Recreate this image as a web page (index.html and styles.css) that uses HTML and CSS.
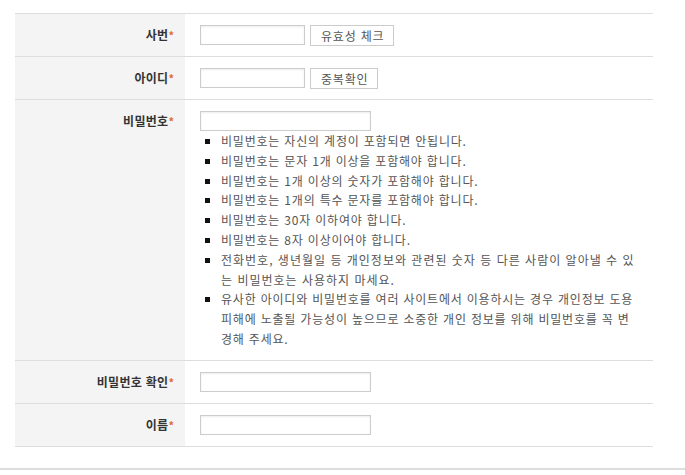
FILE: index.html
```html
<!DOCTYPE html>
<html lang="ko">
<head>
<meta charset="utf-8">
<link rel="stylesheet" href="styles.css">
</head>
<body>
<div class="wrap">
  <table class="form">
    <tr>
      <th>사번<span class="req">*</span></th>
      <td><div class="line"><input class="in short" type="text"><button class="btn">유효성 체크</button></div></td>
    </tr>
    <tr>
      <th>아이디<span class="req">*</span></th>
      <td><div class="line"><input class="in short" type="text"><button class="btn">중복확인</button></div></td>
    </tr>
    <tr>
      <th>비밀번호<span class="req">*</span></th>
      <td>
        <div class="line"><input class="in long" type="password"></div>
        <ul class="rules">
          <li>비밀번호는 자신의 계정이 포함되면 안됩니다.</li>
          <li>비밀번호는 문자 1개 이상을 포함해야 합니다.</li>
          <li>비밀번호는 1개 이상의 숫자가 포함해야 합니다.</li>
          <li>비밀번호는 1개의 특수 문자를 포함해야 합니다.</li>
          <li>비밀번호는 30자 이하여야 합니다.</li>
          <li>비밀번호는 8자 이상이어야 합니다.</li>
          <li class="wide">전화번호, 생년월일 등 개인정보와 관련된 숫자 등 다른 사람이 알아낼 수 있는 비밀번호는 사용하지 마세요.</li>
          <li>유사한 아이디와 비밀번호를 여러 사이트에서 이용하시는 경우 개인정보 도용 피해에 노출될 가능성이 높으므로 소중한 개인 정보를 위해 비밀번호를 꼭 변경해 주세요.</li>
        </ul>
      </td>
    </tr>
    <tr>
      <th>비밀번호 확인<span class="req">*</span></th>
      <td><div class="line"><input class="in long" type="password"></div></td>
    </tr>
    <tr>
      <th>이름<span class="req">*</span></th>
      <td><div class="line"><input class="in long" type="text"></div></td>
    </tr>
  </table>
</div>
<div class="footer-line"></div>
</body>
</html>
```

FILE: styles.css
```css
html, body {
  margin: 0;
  padding: 0;
  background: #fff;
}
body {
  font-family: "Noto Sans CJK KR", "Noto Sans", sans-serif;
  font-size: 12px;
  color: #555;
  letter-spacing: 0.8px;
}
.wrap {
  padding: 13px 32px 0 15px;
}
.form {
  width: 638px;
  border-collapse: collapse;
  border-top: 1px solid #ddd;
}
.form tr {
  border-bottom: 1px solid #ddd;
}
.form th {
  width: 170px;
  box-sizing: border-box;
  background: #f4f4f4;
  text-align: right;
  vertical-align: top;
  padding: 11px 11px 11px 0;
  font-weight: bold;
  color: #333;
  line-height: 20px;
  font-size: 12px;
  letter-spacing: 0.3px;
}
.req {
  color: #e2693e;
  font-size: 11px;
  letter-spacing: 0;
}
.form td {
  vertical-align: top;
  padding: 11px 12px 11px 15px;
}
.line {
  display: flex;
  gap: 5px;
  height: 20px;
}
.in {
  box-sizing: border-box;
  height: 20px;
  margin: 0;
  border: 1px solid #ccc;
  box-shadow: inset 0 1px 2px rgba(0,0,0,0.08);
  background: #fff;
  padding: 0 4px;
  font-size: 12px;
}
.short { width: 105px; }
.long { width: 171px; }
.btn {
  box-sizing: border-box;
  height: 21px;
  margin: 0;
  padding: 0 9px 0 10px;
  border: 1px solid #ccc;
  background: #fff;
  color: #555;
  font-family: "Noto Sans CJK KR", "Noto Sans", sans-serif;
  font-size: 12px;
  letter-spacing: 0.8px;
  line-height: 19px;
  cursor: pointer;
}
.rules {
  margin: 0;
  padding: 0 0 0 21px;
  list-style: square;
  line-height: 19.8px;
  color: #555;
  width: 418px;
  word-break: break-all;
}
.rules li::marker {
  color: #111;
}
.rules .wide {
  letter-spacing: 1px;
}
.footer-line {
  margin-top: 21px;
  height: 2px;
  background: #ddd;
}
```
